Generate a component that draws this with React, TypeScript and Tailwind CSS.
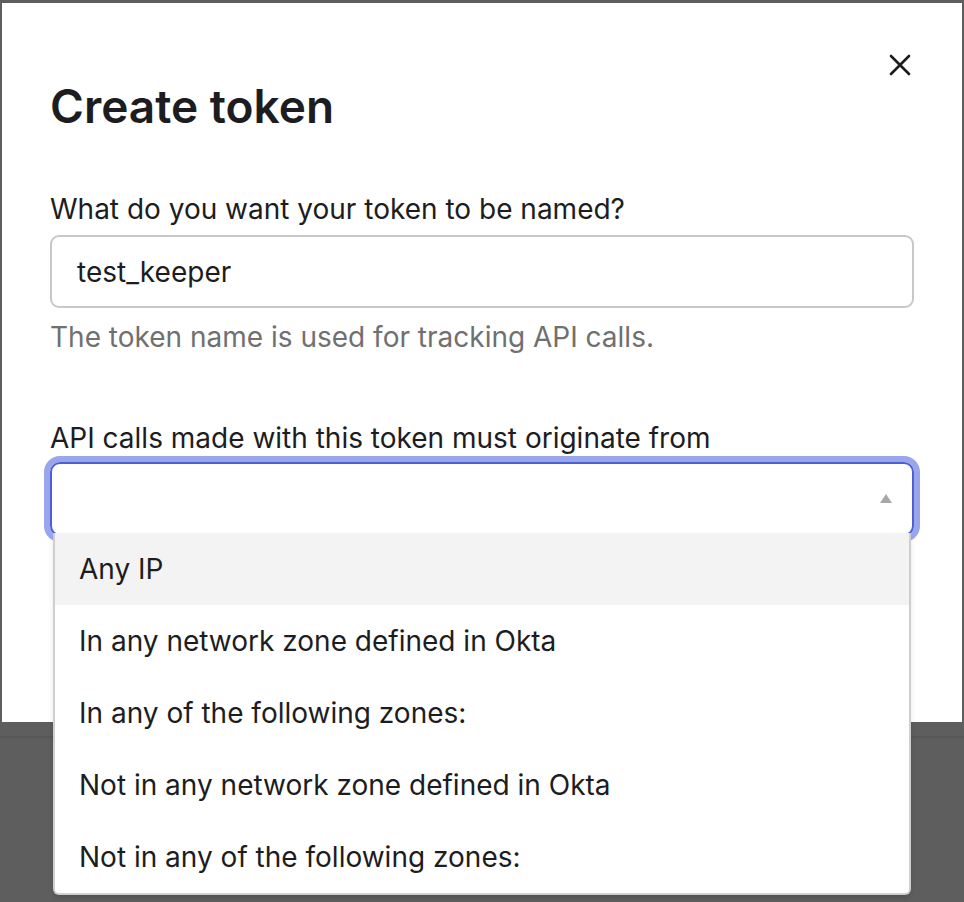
import React from 'react';

const options = [
    'Any IP',
    'In any network zone defined in Okta',
    'In any of the following zones:',
    'Not in any network zone defined in Okta',
    'Not in any of the following zones:',
];

export default function App() {
    return (
        <div className="w-[964px] h-[902px] bg-[#5e5e5e] overflow-hidden" style={{ fontFamily: 'Inter, "Noto Sans", sans-serif' }}>
            <div className="relative ml-[2px] mt-[3px] w-[960px] h-[719px] bg-white px-[48px] pt-[75px] text-[#1d1d21]">
                <button className="absolute right-[51px] top-[51px] text-[#1d1d21]" aria-label="Close">
                    <svg width="22" height="22" viewBox="0 0 22 22" fill="none" stroke="currentColor" strokeWidth="2.6" strokeLinecap="round">
                        <path d="M2 2 L20 20 M20 2 L2 20" />
                    </svg>
                </button>

                <h1 className="text-[46px] leading-[56px] font-semibold">Create token</h1>

                <div className="mt-[58px]">
                    <label className="block text-[28px] leading-[34px] mb-[9px]">What do you want your token to be named?</label>
                    <div className="h-[73px] rounded-[9px] border-2 border-[#c8c8c8] flex items-center px-[25px] text-[28px]">
                        test_keeper
                    </div>
                    <p className="mt-[12px] text-[28px] leading-[34px] text-[#707070]">The token name is used for tracking API calls.</p>
                </div>

                <div className="mt-[67px]">
                    <label className="block text-[28px] leading-[34px] mb-[7px]">API calls made with this token must originate from</label>
                    <div className="relative">
                        <div className="h-[74px] rounded-[10px] border-2 border-[#4c5fd5] ring-[6px] ring-[#9aa6ec] flex items-center justify-end pr-[20px]">
                            <svg width="12" height="9" viewBox="0 0 12 9" className="fill-[#a8a8a8] mt-[-2px]">
                                <path d="M6 0 L12 9 L0 9 Z" />
                            </svg>
                        </div>
                        <ul className="absolute left-[3px] right-[3px] top-[71px] bg-white border-x-2 border-b-2 border-[#cfcfd2] rounded-b-[6px] shadow-md">
                            {options.map((opt, i) => (
                                <li key={opt} className={`h-[72px] flex items-center px-[24px] text-[28px] ${i === 0 ? 'bg-[#f3f3f3]' : ''}`}>
                                    {opt}
                                </li>
                            ))}
                        </ul>
                    </div>
                </div>
            </div>
            <div className="mt-[14px] h-[2px] bg-[#575757]" />
        </div>
    );
}
